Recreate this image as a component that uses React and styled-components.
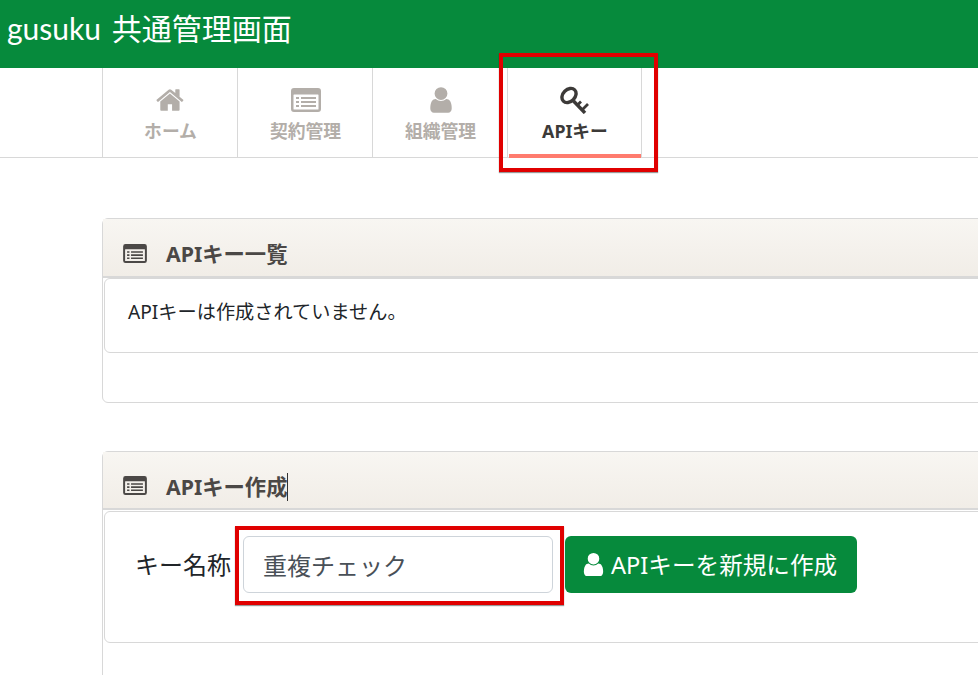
import React from "react";
import styled, {createGlobalStyle} from "styled-components";

const GlobalStyle = createGlobalStyle`
  html, body {
    margin: 0;
    padding: 0;
    background: #fff;
    overflow: hidden;
  }
  body {
    font-family: "Noto Sans", "Noto Sans CJK JP", sans-serif;
    color: #212529;
  }
`;

const HomeIcon = () => (
    <svg viewBox="0 0 1792 1792" width="30" height="30" fill="currentColor">
        <path d="M1408 992v480q0 26-19 45t-45 19h-384v-384h-256v384h-384q-26 0-45-19t-19-45v-480q0-1 .5-3t.5-3l575-474 575 474q1 2 1 6zm223-69l-62 74q-8 9-21 11h-3q-13 0-21-7l-692-577-692 577q-12 8-24 7-13-2-21-11l-62-74q-8-10-7-23.5t11-22.5l719-599q32-26 76-26t76 26l244 204v-195q0-14 9-23t23-9h192q14 0 23 9t9 23v408l219 182q10 8 11 21.5t-7 23.5z"/>
    </svg>
);

const UserIcon = ({size = 30}) => (
    <svg viewBox="0 0 1792 1792" width={size} height={size} fill="currentColor">
        <path d="M1536 1399q0 109-62.5 187t-150.5 78h-854q-88 0-150.5-78t-62.5-187q0-85 8.5-160.5t31.5-152 58.5-131 94-89 134.5-34.5q131 128 313 128t313-128q76 0 134.5 34.5t94 89 58.5 131 31.5 152 8.5 160.5zm-256-887q0 159-112.5 271.5t-271.5 112.5-271.5-112.5-112.5-271.5 112.5-271.5 271.5-112.5 271.5 112.5 112.5 271.5z"/>
    </svg>
);

const ListIcon = ({width = 30, height = 24}) => (
    <svg viewBox="0 0 30 24" width={width} height={height} fill="currentColor">
        <path
            fillRule="evenodd"
            d="M3 0h24a3 3 0 0 1 3 3v18a3 3 0 0 1-3 3H3a3 3 0 0 1-3-3V3a3 3 0 0 1 3-3zM3 6.5a.5.5 0 0 0-.5.5v14a.5.5 0 0 0 .5.5h24a.5.5 0 0 0 .5-.5V7a.5.5 0 0 0-.5-.5zM5 9h3v2H5zM5 13h3v2H5zM5 17h3v2H5zM10 9h15v2H10zM10 13h15v2H10zM10 17h15v2H10z"
        />
    </svg>
);

const KeyIcon = () => (
    <svg viewBox="0 0 30 28" width="30" height="28" fill="none" stroke="currentColor">
        <ellipse cx="9" cy="9.5" rx="8" ry="6" transform="rotate(-45 9 9.5)" strokeWidth="3.4"/>
        <path d="M13.5 15L25 27" strokeWidth="3.4"/>
        <path d="M17.5 19l3.5-3.5M22 24l6-6" strokeWidth="2.8"/>
    </svg>
);

const Header = styled.header`
  height: 68px;
  background: #068a3c;
  color: #fff;
  font-family: Lato, "Noto Sans CJK JP", sans-serif;
  font-size: 30px;
  line-height: 57px;
  word-spacing: 3px;
  padding-left: 7px;
  white-space: nowrap;
`;

const Nav = styled.nav`
  display: flex;
  height: 90px;
  box-sizing: border-box;
  padding-left: 102px;
  border-bottom: 1px solid #d8d8d8;
`;

const Tab = styled.div`
  position: relative;
  width: 135px;
  box-sizing: border-box;
  border-left: 1px solid #d8d8d8;
  display: flex;
  flex-direction: column;
  align-items: center;
  padding: 17px 0 0 1px;
  color: ${props => props.$active ? "#3c3a38" : "#b3aea9"};
  font-size: 17.8px;
  font-weight: 700;
  line-height: 26px;

  &:last-child {
    border-right: 1px solid #d8d8d8;
  }
`;

const TabIcon = styled.div`
  height: 30px;
  display: flex;
  align-items: center;
  justify-content: center;
`;

const TabLabel = styled.div`
  margin-top: 3px;
`;

const TabMarker = styled.div`
  position: absolute;
  left: 1px;
  right: 0;
  bottom: -1px;
  height: 4px;
  background: #ff7b6e;
`;

const Main = styled.main`
  padding: 60px 0 0 102px;
  width: 1100px;
  display: flex;
  flex-direction: column;
  gap: 48px;
`;

const Panel = styled.section`
  box-sizing: border-box;
  border: 1px solid #d8d8d8;
  border-radius: 6px;
  height: ${props => props.$height}px;
`;

const PanelHead = styled.div`
  height: ${props => props.$height}px;
  box-sizing: border-box;
  display: flex;
  align-items: center;
  gap: 19px;
  padding: 13px 0 0 20px;
  background: linear-gradient(#f8f6f2, #f1ede7);
  border-bottom: 2px solid #d8d8d8;
  color: #4b4846;
  font-size: 21.3px;
  font-weight: 700;
  line-height: 28px;

  svg {
    margin-top: -2px;
  }
`;

const Caret = styled.span`
  display: inline-block;
  border-right: 1px solid #333;
`;

const PanelBody = styled.div`
  box-sizing: border-box;
  height: ${props => props.$height}px;
  margin: 0 0 0 1px;
  padding: ${props => props.$form ? "24px 30px 0" : "19px 23px 0"};
  border: 1px solid #d8d8d8;
  border-radius: 6px;
  font-size: 19.2px;
  line-height: 27px;
  color: #212529;
  ${props => props.$form && "margin-top: 1px;"}
`;

const FormRow = styled.div`
  display: flex;
  align-items: center;
  font-size: 24px;
  line-height: 36px;
`;

const FieldLabel = styled.label`
  margin-right: 12px;
`;

const TextInput = styled.input`
  box-sizing: border-box;
  width: 310px;
  height: 57px;
  padding: 0 19px;
  border: 1px solid #ced4da;
  border-radius: 6px;
  font: inherit;
  color: #495057;
  margin-right: 12px;
  outline: none;
`;

const CreateButton = styled.button`
  box-sizing: border-box;
  width: 292px;
  height: 57px;
  display: flex;
  align-items: center;
  gap: 4px;
  padding: 0 0 0 15px;
  border: 0;
  border-radius: 6px;
  background: #068a3c;
  color: #fff;
  font: inherit;
  font-size: 23.6px;
  white-space: nowrap;
`;

const Callout = styled.div`
  position: absolute;
  box-sizing: border-box;
  border: 4px solid #e00000;
  box-shadow: 0 1px 1px rgba(0, 0, 0, 0.4);
  left: ${props => props.$left}px;
  top: ${props => props.$top}px;
  width: ${props => props.$width}px;
  height: ${props => props.$height}px;
`;

const tabs = [
    {label: "ホーム", icon: <HomeIcon/>},
    {label: "契約管理", icon: <ListIcon/>},
    {label: "組織管理", icon: <UserIcon/>},
    {label: "APIキー", icon: <KeyIcon/>, active: true},
];

const App = () => {
    return (
        <>
            <GlobalStyle/>
            <Header>gusuku 共通管理画面</Header>
            <Nav>
                {tabs.map(tab => (
                    <Tab key={tab.label} $active={tab.active}>
                        <TabIcon>{tab.icon}</TabIcon>
                        <TabLabel>{tab.label}</TabLabel>
                        {tab.active && <TabMarker/>}
                    </Tab>
                ))}
            </Nav>
            <Main>
                <Panel $height={185}>
                    <PanelHead $height={59}>
                        <ListIcon width={24} height={19}/>
                        <span>APIキー一覧</span>
                    </PanelHead>
                    <PanelBody $height={75}>APIキーは作成されていません。</PanelBody>
                </Panel>
                <Panel $height={300}>
                    <PanelHead $height={58}>
                        <ListIcon width={24} height={19}/>
                        <Caret>APIキー作成</Caret>
                    </PanelHead>
                    <PanelBody $form $height={132}>
                        <FormRow>
                            <FieldLabel>キー名称</FieldLabel>
                            <TextInput defaultValue="重複チェック"/>
                            <CreateButton><UserIcon size={27}/>APIキーを新規に作成</CreateButton>
                        </FormRow>
                    </PanelBody>
                </Panel>
            </Main>
            <Callout $left={499} $top={53} $width={159} $height={119}/>
            <Callout $left={235} $top={526} $width={329} $height={79}/>
        </>
    );
};

export default App;
